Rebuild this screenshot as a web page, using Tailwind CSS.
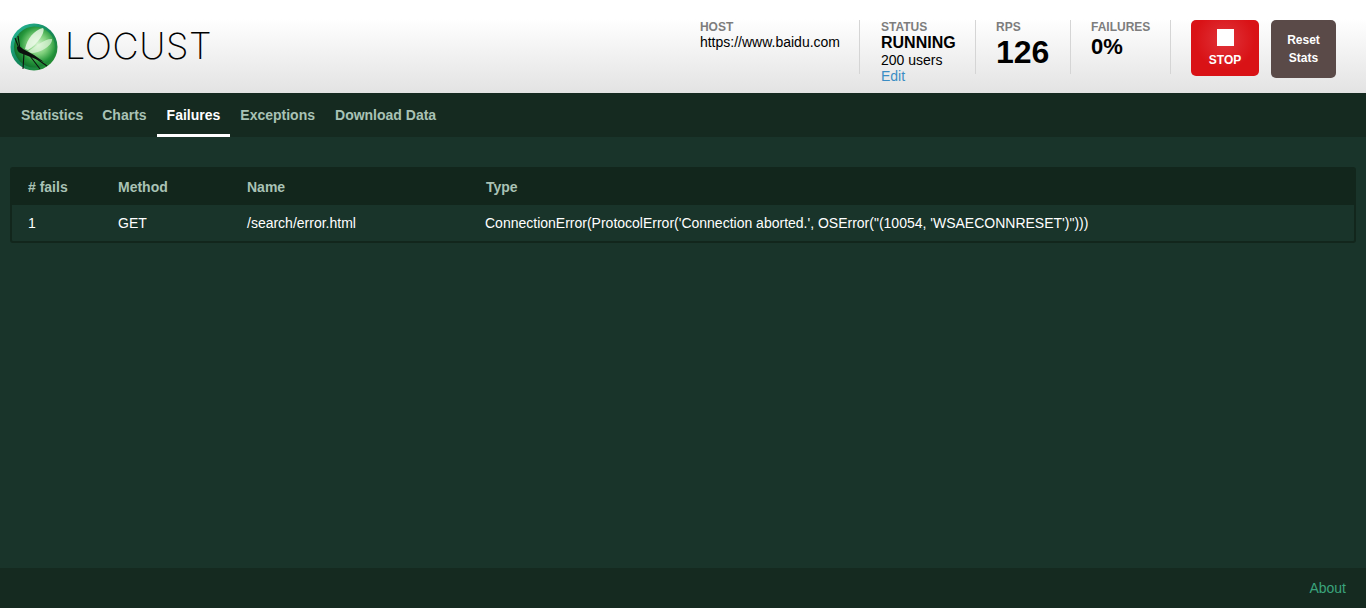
<!DOCTYPE html>
<html lang="en">
<head>
  <meta charset="UTF-8" />
  <meta name="viewport" content="width=device-width, initial-scale=1" />
  <title>Locust</title>
  <script src="https://cdn.jsdelivr.net/npm/@tailwindcss/browser@4"></script>
</head>
<body class="bg-[#19342a] h-[608px] overflow-hidden flex flex-col font-['Liberation_Sans',Arial,sans-serif] text-sm">

  <header class="h-[93px] shrink-0 flex justify-between bg-gradient-to-b from-white from-20% to-[#e3e3e3]">
    <a href="#" class="flex items-center pl-[10px] pb-[1px] gap-[7px] text-black">
      <svg width="48" height="48" viewBox="0 0 48 48" class="mt-[1px]">
        <defs>
          <radialGradient id="ball" cx="58%" cy="44%" r="60%">
            <stop offset="0" stop-color="#d6f4d0" />
            <stop offset="0.4" stop-color="#7fd07c" />
            <stop offset="0.72" stop-color="#27983c" />
            <stop offset="1" stop-color="#0f6e2b" />
          </radialGradient>
          <linearGradient id="rim" x1="0" y1="0" x2="1" y2="1">
            <stop offset="0" stop-color="#2cc0a4" />
            <stop offset="0.5" stop-color="#12865a" />
            <stop offset="1" stop-color="#2c8f22" />
          </linearGradient>
        </defs>
        <circle cx="24" cy="24" r="23.5" fill="url(#rim)" />
        <circle cx="24.5" cy="24" r="20.5" fill="url(#ball)" />
        <path d="M15 26 C17 16 24 7 33 5 C36 8 28 21 18 27 Z" fill="#f2fbef" fill-opacity="0.8" />
        <path d="M18 28 C25 24 36 15 42 16 C43 22 31 30 21 30 Z" fill="#e6f8e2" fill-opacity="0.65" />
        <path d="M7 24 C9 23 11 24 13 26 L24 32 L34 39 L23 35 L13 31 C9 30 7 28 7 24 Z" fill="#0c120e" />
        <path d="M10 26 L8 13 M8.5 24 L5 15 M14 30 L13 46 M20 33 L30 46 M24 34 L37 43" stroke="#0c120e" stroke-width="1.1" fill="none" />
      </svg>
      <span class="font-['Inter',sans-serif] font-extralight text-[36px] leading-none tracking-[0.6px] mt-[-1px]">LOCUST</span>
    </a>

    <div class="flex items-start pt-[20px] pr-[30px]">
      <div class="h-[54px] pr-[19px] border-r border-[#d5d5d5]">
        <div class="text-xs font-bold text-[#7d7d7d] leading-[14px]">HOST</div>
        <div class="text-black leading-[16px]">https://www.baidu.com</div>
      </div>
      <div class="h-[54px] pl-[21px] pr-[20px] border-r border-[#d5d5d5] w-[116px]">
        <div class="text-xs font-bold text-[#7d7d7d] leading-[14px]">STATUS</div>
        <div class="text-base font-bold text-black leading-[18px]">RUNNING</div>
        <div class="text-black leading-[17px]">200 users</div>
        <a href="#" class="block text-[#3b8dc4] leading-[14px]">Edit</a>
      </div>
      <div class="h-[54px] pl-[20px] pr-[20px] border-r border-[#d5d5d5] w-[95px]">
        <div class="text-xs font-bold text-[#7d7d7d] leading-[14px]">RPS</div>
        <div class="text-[32px] font-bold text-black leading-[36px]">126</div>
      </div>
      <div class="h-[54px] pl-[20px] pr-[20px] border-r border-[#d5d5d5] w-[100px]">
        <div class="text-xs font-bold text-[#7d7d7d] leading-[14px]">FAILURES</div>
        <div class="text-[22px] font-bold text-black leading-[25px]">0%</div>
      </div>
      <a href="#" class="ml-[20px] w-[68px] h-[56px] rounded-[5px] flex flex-col items-center pt-[9px] bg-[radial-gradient(circle_at_50%_35%,#e0343a,#d91216_60%)] text-white text-xs font-bold">
        <span class="w-[17px] h-[17px] bg-white"></span>
        <span class="mt-[5px] leading-[18px]">STOP</span>
      </a>
      <a href="#" class="ml-[12px] w-[65px] h-[58px] rounded-[5px] bg-[#5a4a48] text-white text-xs font-bold text-center pt-[11px] leading-[18px]">Reset<br />Stats</a>
    </div>
  </header>

  <nav class="h-[44px] shrink-0 bg-[#152a20] flex pl-[11px] font-bold text-[#a9c2b5]">
    <a href="#" class="pl-[10px] pr-[9px] pt-[14px] leading-[16px]">Statistics</a>
    <a href="#" class="px-[10px] pt-[14px] leading-[16px]">Charts</a>
    <a href="#" class="px-[10px] pt-[14px] leading-[16px] text-white border-b-[3px] border-white">Failures</a>
    <a href="#" class="px-[10px] pt-[14px] leading-[16px]">Exceptions</a>
    <a href="#" class="px-[10px] pt-[14px] leading-[16px]">Download Data</a>
  </nav>

  <main class="flex-1 px-[10px] pt-[30px]">
    <div class="w-[1346px] border-2 border-[#12261c] rounded-[3px] overflow-hidden">
      <table class="w-full table-fixed text-left">
        <thead class="bg-[#12261c] text-[#a9c2b5]">
          <tr class="h-[36px]">
            <th class="w-[90px] pl-[16px] font-bold">#&nbsp;fails</th>
            <th class="w-[129px] pl-[16px] font-bold">Method</th>
            <th class="w-[238px] pl-[16px] font-bold">Name</th>
            <th class="pl-[17px] font-bold">Type</th>
          </tr>
        </thead>
        <tbody class="text-white">
          <tr class="h-[36px]">
            <td class="pl-[16px]">1</td>
            <td class="pl-[16px]">GET</td>
            <td class="pl-[16px]">/search/error.html</td>
            <td class="pl-[16px]">ConnectionError(ProtocolError('Connection aborted.', OSError("(10054, 'WSAECONNRESET')")))</td>
          </tr>
        </tbody>
      </table>
    </div>
  </main>

  <footer class="h-[40px] shrink-0 bg-[#152a20] flex items-center justify-end pr-[20px]">
    <a href="#" class="text-[#3aa47c]">About</a>
  </footer>

</body>
</html>
